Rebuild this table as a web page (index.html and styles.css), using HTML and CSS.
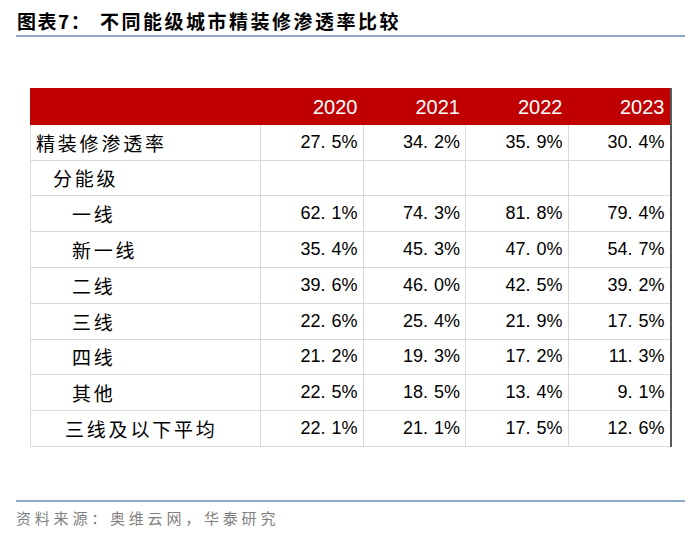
FILE: index.html
```html
<!DOCTYPE html>
<html lang="zh-CN">
<head>
<meta charset="utf-8">
<title>不同能级城市精装修渗透率比较</title>
<link rel="stylesheet" href="styles.css">
</head>
<body>
<div class="page">
  <div class="title"><span class="tnum">图表7：</span><span class="ttext">不同能级城市精装修渗透率比较</span></div>
  <table class="grid">
    <colgroup>
      <col class="c-label"><col class="c-num"><col class="c-num"><col class="c-num"><col class="c-num">
    </colgroup>
    <thead>
      <tr><th></th><th>2020</th><th>2021</th><th>2022</th><th>2023</th></tr>
    </thead>
    <tbody>
      <tr><td class="l0">精装修渗透率</td><td>27<span class="d">.</span>5%</td><td>34<span class="d">.</span>2%</td><td>35<span class="d">.</span>9%</td><td>30<span class="d">.</span>4%</td></tr>
      <tr><td class="l1">分能级</td><td></td><td></td><td></td><td></td></tr>
      <tr><td class="l2">一线</td><td>62<span class="d">.</span>1%</td><td>74<span class="d">.</span>3%</td><td>81<span class="d">.</span>8%</td><td>79<span class="d">.</span>4%</td></tr>
      <tr><td class="l2">新一线</td><td>35<span class="d">.</span>4%</td><td>45<span class="d">.</span>3%</td><td>47<span class="d">.</span>0%</td><td>54<span class="d">.</span>7%</td></tr>
      <tr><td class="l2">二线</td><td>39<span class="d">.</span>6%</td><td>46<span class="d">.</span>0%</td><td>42<span class="d">.</span>5%</td><td>39<span class="d">.</span>2%</td></tr>
      <tr><td class="l2">三线</td><td>22<span class="d">.</span>6%</td><td>25<span class="d">.</span>4%</td><td>21<span class="d">.</span>9%</td><td>17<span class="d">.</span>5%</td></tr>
      <tr><td class="l2">四线</td><td>21<span class="d">.</span>2%</td><td>19<span class="d">.</span>3%</td><td>17<span class="d">.</span>2%</td><td>11<span class="d">.</span>3%</td></tr>
      <tr><td class="l2">其他</td><td>22<span class="d">.</span>5%</td><td>18<span class="d">.</span>5%</td><td>13<span class="d">.</span>4%</td><td>9<span class="d">.</span>1%</td></tr>
      <tr><td class="l3">三线及以下平均</td><td>22<span class="d">.</span>1%</td><td>21<span class="d">.</span>1%</td><td>17<span class="d">.</span>5%</td><td>12<span class="d">.</span>6%</td></tr>
    </tbody>
  </table>
  <div class="source">资料来源：奥维云网，华泰研究</div>
</div>
</body>
</html>
```

FILE: styles.css
```css
html, body {
  margin: 0;
  padding: 0;
  background: #ffffff;
}

.page {
  width: 700px;
  height: 535px;
  box-sizing: border-box;
  padding: 0 15px 0 16px;
  font-family: "Noto Sans CJK SC", "Liberation Sans", sans-serif;
  color: #000;
}

.title {
  padding: 9px 0 2px 1px;
  line-height: 24px;
  height: 24px;
  border-bottom: 2px solid #8fa8c8;
  font-weight: bold;
  font-size: 19px;
  white-space: nowrap;
  display: flex;
  align-items: center;
}

.tnum {
  letter-spacing: 1.5px;
  width: 83px;
  font-family: "Noto Sans CJK SC", sans-serif;
}

.ttext {
  letter-spacing: 2.5px;
}

.grid {
  margin: 51px 0 0 14px;
  width: 640px;
  table-layout: fixed;
  border-collapse: collapse;
  border-top: 1px solid #404040;
  border-left: 1px solid #404040;
  border-bottom: 1px solid #404040;
  border-right: 2px solid #5a5a5a;
}

.c-label { width: 230px; }
.c-num { width: 102.5px; }

.grid tr {
  height: 35.8px;
}

.grid th {
  background: #c00000;
  color: #ffffff;
  font-family: "Liberation Sans", Arial, sans-serif;
  font-weight: normal;
  font-size: 20px;
  text-align: right;
  padding: 2px 5px 0 0;
  border: 1px solid #c00000;
}

.grid td {
  border: 1px solid #d9d9d9;
  padding: 0 5px 0 0;
  text-align: right;
  font-family: "Liberation Sans", Arial, sans-serif;
  font-size: 18px;
  white-space: nowrap;
}

.grid td.l0, .grid td.l1, .grid td.l2, .grid td.l3 {
  text-align: left;
  font-family: "Noto Sans CJK SC", sans-serif;
  font-size: 19px;
  letter-spacing: 2.8px;
  padding-right: 0;
}

.grid td.l0 { padding-left: 5px; }
.grid td.l1 { padding-left: 22px; }
.grid td.l2 { padding-left: 41px; }
.grid td.l3 { padding-left: 34px; }

.d {
  margin-right: 6px;
}

.source {
  margin-top: 53px;
  border-top: 2px solid #8fa8c8;
  padding-top: 6px;
  line-height: 20px;
  font-size: 15px;
  letter-spacing: 3.8px;
  color: #7f7f7f;
}
```
